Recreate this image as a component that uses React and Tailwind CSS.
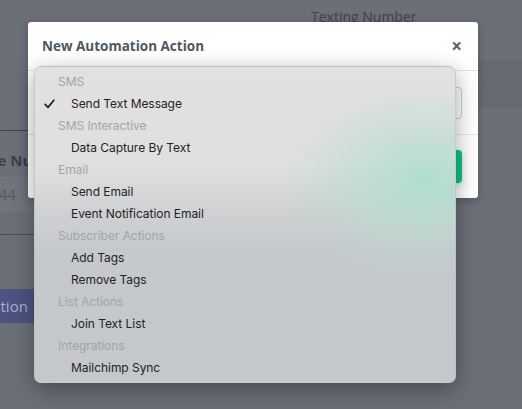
import React from "react";

const MENU = [
  { label: "SMS", header: true },
  { label: "Send Text Message", checked: true },
  { label: "SMS Interactive", header: true },
  { label: "Data Capture By Text" },
  { label: "Email", header: true },
  { label: "Send Email" },
  { label: "Event Notification Email" },
  { label: "Subscriber Actions", header: true },
  { label: "Add Tags" },
  { label: "Remove Tags" },
  { label: "List Actions", header: true },
  { label: "Join Text List" },
  { label: "Integrations", header: true },
  { label: "Mailchimp Sync" },
];

const Check = () => (
  <svg width="11" height="10" viewBox="0 0 11 10" className="shrink-0">
    <path d="M1.2 5.4 L4 8.4 L9.8 1.2" fill="none" stroke="#1f1f1f" strokeWidth="1.7" strokeLinecap="round" strokeLinejoin="round" />
  </svg>
);

const App = () => {
  return (
    <div className="relative w-[522px] h-[409px] overflow-hidden bg-[#6b6f78] font-['Open_Sans',sans-serif]">
      {/* page behind the backdrop */}
      <div className="flex flex-col h-full">
        <div className="h-[60px] pl-[311px] pt-[6px] text-[14px] text-[#3e434c]">Texting Number</div>
        <div className="flex flex-1">
          <div className="w-[300px] flex flex-col">
            <div className="h-[70px]" />
            <div className="h-px bg-[#40454d]" />
            <div className="h-[46px] flex items-end pb-[6px] overflow-hidden">
              <span className="ml-[-41px] text-[15px] font-bold text-[#3b4048] whitespace-nowrap">Phone Number</span>
            </div>
            <div className="h-[35px] bg-[#71747d] flex items-center overflow-hidden">
              <span className="ml-[-84px] text-[14.5px] text-[#54585f] whitespace-nowrap">(555) 555-0144</span>
            </div>
            <div className="h-[22px]" />
            <div className="h-px bg-[#484c55]" />
            <div className="h-[54px]" />
            <div className="h-[34px] w-[120px] bg-[#4c5382] flex items-center overflow-hidden">
              <span className="ml-[-90px] text-[15px] text-[#a9aecb] whitespace-nowrap">New Automation</span>
            </div>
          </div>
          <div className="flex-1 flex flex-col">
            <div className="h-[48px] bg-[#666a73]" />
          </div>
        </div>
      </div>

      {/* modal */}
      <div className="absolute left-[28px] top-[22px] w-[450px] h-[176px] bg-white rounded-[3px] shadow-[0_2px_8px_rgba(0,0,0,0.25)] flex flex-col">
        <div className="h-[49px] px-[14px] flex items-center justify-between border-b border-[#e3e3e3]">
          <span className="text-[13.5px] font-bold text-[#4e5862]">New Automation Action</span>
          <span className="text-[19px] font-bold text-[#5f6369] leading-none mr-[2px]">×</span>
        </div>
        <div className="h-[64px] px-[16px] flex items-center border-b border-[#e3e3e3]">
          <div className="flex-1 h-[32px] border border-[#c9ced6] rounded-[4px]" />
        </div>
        <div className="flex-1 px-[16px] flex items-center justify-end">
          <div className="w-[110px] h-[33px] bg-[#10c088] rounded-[4px] shadow-[0_2px_6px_rgba(16,192,136,0.35)]" />
        </div>
      </div>

      {/* native select popup */}
      <div className="absolute left-[34px] top-[66px] w-[422px] h-[317px] rounded-[7px] overflow-hidden border border-[#b9bbbe]/60 shadow-[0_6px_22px_rgba(0,0,0,0.35)] bg-[linear-gradient(180deg,#e1e1e0_0%,#dfdfdf_32%,#cfd1d3_46%,#c6c9cc_58%,#c5c8cb_100%)] font-['Inter',sans-serif]">
        <div className="absolute left-[250px] top-[20px] w-[280px] h-[190px] rounded-full bg-[radial-gradient(closest-side,rgba(168,222,206,0.85),rgba(180,220,208,0.45)_55%,rgba(200,215,212,0)_100%)]" />
        <div className="relative flex flex-col pt-[4px]">
          {MENU.map((m) => (
            <div key={m.label} className="h-[22px] flex items-center text-[12px] tracking-[-0.05px]">
              {m.header ? (
                <span className="pl-[23px] text-[#a2a4a6]">{m.label}</span>
              ) : (
                <>
                  <span className="w-[36px] pl-[9px] flex items-center">{m.checked && <Check />}</span>
                  <span className="text-[#232323]">{m.label}</span>
                </>
              )}
            </div>
          ))}
        </div>
      </div>
    </div>
  );
};

export default App;
